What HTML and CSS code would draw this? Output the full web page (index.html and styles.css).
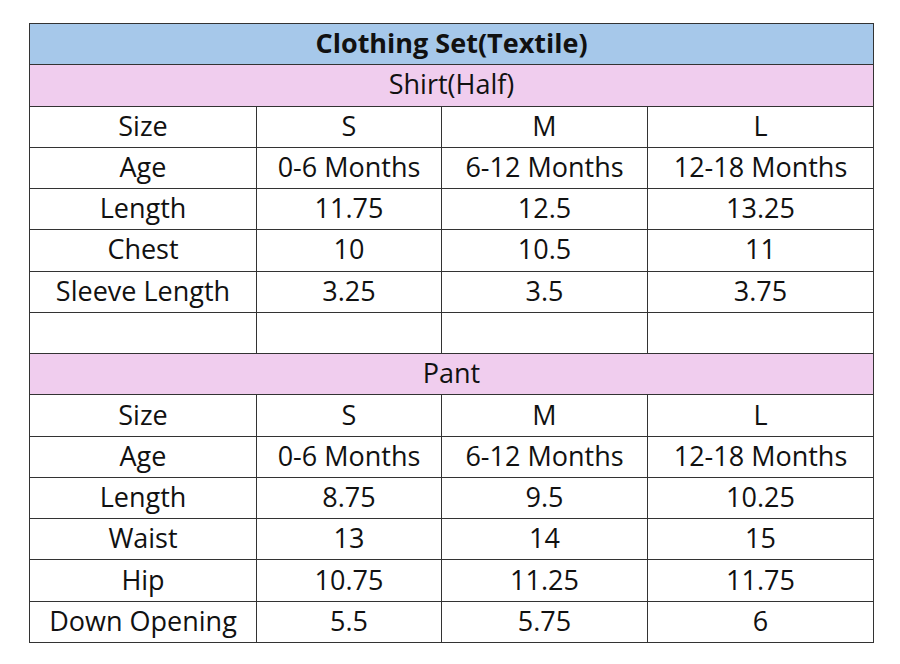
FILE: index.html
```html
<!DOCTYPE html>
<html>
<head>
<meta charset="utf-8">
<link rel="stylesheet" href="styles.css">
</head>
<body>
<table class="chart">
  <colgroup>
    <col class="c1"><col class="c2"><col class="c3"><col class="c4">
  </colgroup>
  <tr class="title"><td colspan="4">Clothing Set(Textile)</td></tr>
  <tr class="section"><td colspan="4">Shirt(Half)</td></tr>
  <tr><td>Size</td><td>S</td><td>M</td><td>L</td></tr>
  <tr><td>Age</td><td>0-6 Months</td><td>6-12 Months</td><td>12-18 Months</td></tr>
  <tr><td>Length</td><td>11.75</td><td>12.5</td><td>13.25</td></tr>
  <tr><td>Chest</td><td>10</td><td>10.5</td><td>11</td></tr>
  <tr><td>Sleeve Length</td><td>3.25</td><td>3.5</td><td>3.75</td></tr>
  <tr><td></td><td></td><td></td><td></td></tr>
  <tr class="section"><td colspan="4">Pant</td></tr>
  <tr><td>Size</td><td>S</td><td>M</td><td>L</td></tr>
  <tr><td>Age</td><td>0-6 Months</td><td>6-12 Months</td><td>12-18 Months</td></tr>
  <tr><td>Length</td><td>8.75</td><td>9.5</td><td>10.25</td></tr>
  <tr><td>Waist</td><td>13</td><td>14</td><td>15</td></tr>
  <tr><td>Hip</td><td>10.75</td><td>11.25</td><td>11.75</td></tr>
  <tr><td>Down Opening</td><td>5.5</td><td>5.75</td><td>6</td></tr>
</table>
</body>
</html>
```
FILE: styles.css
```css
html, body {
  margin: 0;
  padding: 0;
  background: #ffffff;
}
body {
  padding: 23px 0 0 29px;
  font-family: "Open Sans", "Noto Sans", sans-serif;
  color: #111;
}
.chart {
  border-collapse: collapse;
  table-layout: fixed;
  width: 844px;
}
.chart tr {
  height: 41.27px;
}
.c1 { width: 227px; }
.c2 { width: 185px; }
.c3 { width: 206px; }
.c4 { width: 226px; }
.chart td {
  border: 1px solid #333;
  padding: 0 0 2px 0;
  text-align: center;
  vertical-align: middle;
  font-size: 27px;
  line-height: 36px;
  white-space: nowrap;
}
.title td {
  background: #a6c8ea;
  font-weight: 700;
}
.section td {
  background: #f0cdee;
}
```
